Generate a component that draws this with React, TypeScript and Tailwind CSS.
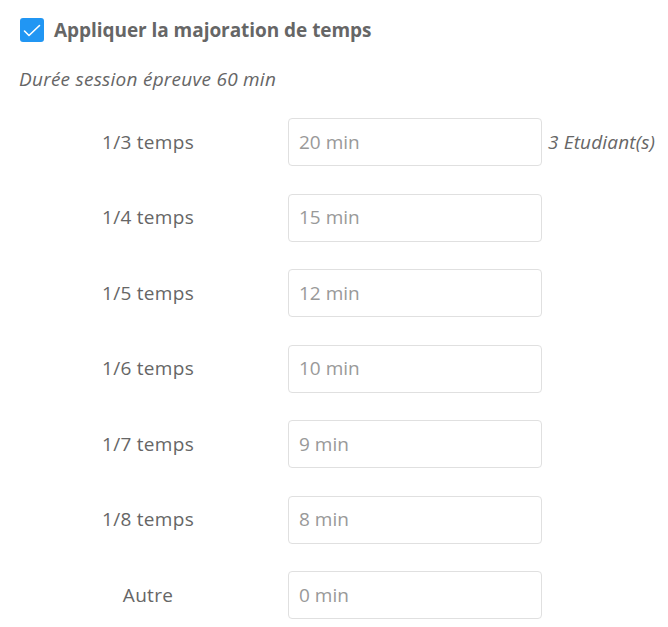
import React from "react";

const rows = [
  { label: "1/3 temps", value: "20 min", note: "3 Etudiant(s)" },
  { label: "1/4 temps", value: "15 min" },
  { label: "1/5 temps", value: "12 min" },
  { label: "1/6 temps", value: "10 min" },
  { label: "1/7 temps", value: "9 min" },
  { label: "1/8 temps", value: "8 min" },
  { label: "Autre", value: "0 min" },
];

export default function App() {
  return (
    <div
      className="w-[668px] h-[627px] bg-white text-[#666] overflow-hidden"
      style={{ fontFamily: '"Open Sans", "Noto Sans", sans-serif' }}
    >
      <div className="flex items-center gap-[10px] pl-[20px] pt-[17px]">
        <span className="flex h-[24px] w-[24px] items-center justify-center rounded-[3px] bg-[#2196f3]">
          <svg width="24" height="24" viewBox="0 0 24 24" fill="none">
            <path d="M4.5 13L9 17.5L19.5 7.5" stroke="white" strokeWidth="1.6" strokeLinecap="round" strokeLinejoin="round" />
          </svg>
        </span>
        <span className="text-[19px] font-bold leading-[26px] tracking-[-0.05px]">Appliquer la majoration de temps</span>
      </div>
      <div className="pl-[19px] pt-[23px] text-[19px] italic leading-[26px] tracking-[0.25px]">
        Durée session épreuve 60 min
      </div>
      <div className="flex flex-col gap-[27.5px] pt-[26px]">
        {rows.map((r) => (
          <div key={r.label} className="flex items-center">
            <div className="w-[288px] pl-[8px] text-center text-[19px] tracking-[0.3px]">{r.label}</div>
            <div className="flex h-[48px] w-[254px] items-center rounded-[4px] border border-[#e0e0e0] px-[10px] text-[19px] text-[#999]">
              {r.value}
            </div>
            {r.note && (
              <div className="pl-[6px] text-[19px] italic tracking-[0.15px] whitespace-nowrap">{r.note}</div>
            )}
          </div>
        ))}
      </div>
    </div>
  );
}
